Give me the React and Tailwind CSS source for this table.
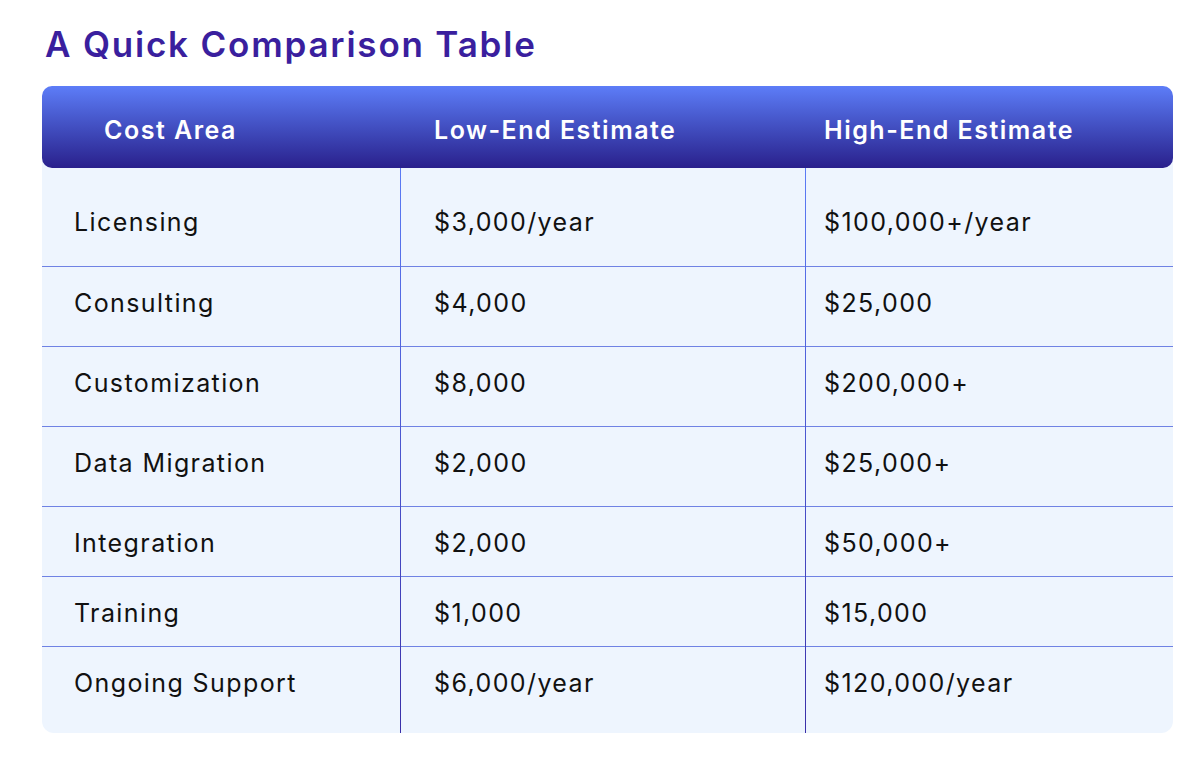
const rows = [
  { area: "Licensing", low: "$3,000/year", high: "$100,000+/year", h: "h-[99px]", pt: "pt-[38px]" },
  { area: "Consulting", low: "$4,000", high: "$25,000", h: "h-[80px]", pt: "pt-[20px]" },
  { area: "Customization", low: "$8,000", high: "$200,000+", h: "h-[80px]", pt: "pt-[20px]" },
  { area: "Data Migration", low: "$2,000", high: "$25,000+", h: "h-[80px]", pt: "pt-[20px]" },
  { area: "Integration", low: "$2,000", high: "$50,000+", h: "h-[70px]", pt: "pt-[20px]" },
  { area: "Training", low: "$1,000", high: "$15,000", h: "h-[70px]", pt: "pt-[20px]" },
  { area: "Ongoing Support", low: "$6,000/year", high: "$120,000/year", h: "h-[86px]", pt: "pt-[20px]" },
];

const Column = ({ field, width, pad, divider }) => (
  <div
    className={`${width} flex flex-col ${
      divider
        ? "border-l [border-image:linear-gradient(to_bottom,#5b7bf5,#3a2fa8)_1]"
        : ""
    }`}
  >
    {rows.map((row, i) => (
      <div
        key={row.area}
        className={`${row.h} ${row.pt} ${pad} ${
          i < rows.length - 1 ? "border-b border-[#6f82e4]" : ""
        }`}
      >
        <span className="block leading-[32px] text-[25px] tracking-[1.4px] text-[#111111]">
          {row[field]}
        </span>
      </div>
    ))}
  </div>
);

export default function App() {
  return (
    <div
      className="min-h-screen bg-white pl-[42px] pt-[24px]"
      style={{ fontFamily: "Inter, 'Noto Sans', sans-serif" }}
    >
      <h1 className="pl-[3px] text-[35px] leading-[40px] font-semibold text-[#3a1f9e] tracking-[1.8px]">
        A Quick Comparison Table
      </h1>

      <div className="mt-[22px] w-[1131px] rounded-[12px] bg-[#eef5fe]">
        {/* Header */}
        <div className="flex h-[82px] items-center rounded-[10px] bg-gradient-to-b from-[#5d7df8] to-[#2a1f8c] pt-[8px] text-[25px] font-semibold tracking-[1.5px] text-white">
          <div className="w-[358px] pl-[62px]">Cost Area</div>
          <div className="w-[405px] pl-[34px]">Low-End Estimate</div>
          <div className="w-[368px] pl-[19px]">High-End Estimate</div>
        </div>

        {/* Body */}
        <div className="flex">
          <Column field="area" width="w-[358px]" pad="pl-[32px]" />
          <Column field="low" width="w-[405px]" pad="pl-[33px]" divider />
          <Column field="high" width="w-[368px]" pad="pl-[18px]" divider />
        </div>
      </div>
    </div>
  );
}
